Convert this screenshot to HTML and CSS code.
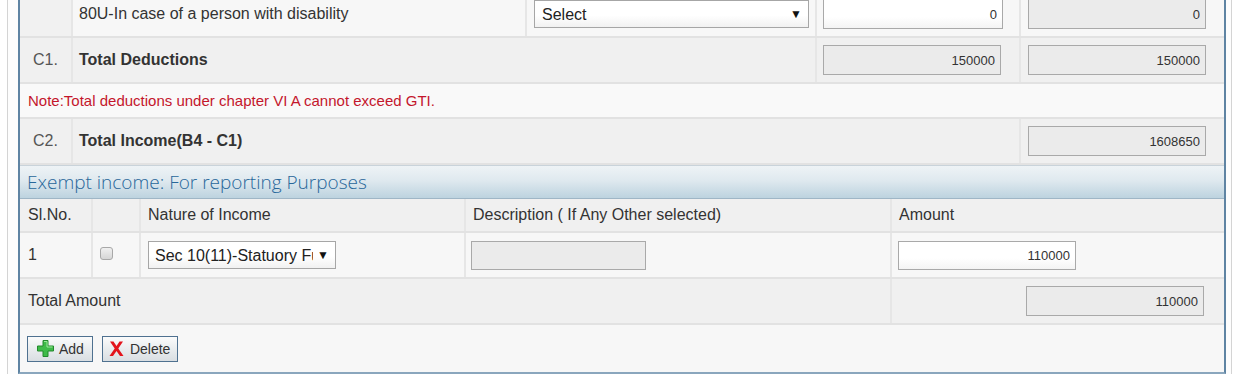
FILE: index.html
```html
<!DOCTYPE html>
<html lang="en">
<head>
  <meta charset="UTF-8">
  <title>Deductions and Exempt Income</title>
  <link rel="stylesheet" href="styles.css">
</head>
<body>
  <div class="page">
    <div class="panel">
      <div class="row top row-light">
        <div class="cell sl"></div>
        <div class="cell">80U-In case of a person with disability</div>
        <div class="cell">
          <div class="select-wrap wide">
            <select><option>Select</option></select>
          </div>
        </div>
        <div class="cell"><input class="num" type="text" value="0"></div>
        <div class="cell"><input class="num ro" type="text" value="0" readonly></div>
      </div>

      <div class="row top c1">
        <div class="cell sl center">C1.</div>
        <div class="cell span2"><b>Total Deductions</b></div>
        <div class="cell"><input class="num ro" type="text" value="150000" readonly></div>
        <div class="cell"><input class="num ro" type="text" value="150000" readonly></div>
      </div>

      <div class="row note">
        <div class="cell">Note:Total deductions under chapter VI A cannot exceed GTI.</div>
      </div>

      <div class="row top c2">
        <div class="cell sl center">C2.</div>
        <div class="cell span3"><b>Total Income(B4 - C1)</b></div>
        <div class="cell"><input class="num ro" type="text" value="1608650" readonly></div>
      </div>

      <div class="section-head">Exempt income: For reporting Purposes</div>

      <div class="row exempt head">
        <div class="cell">Sl.No.</div>
        <div class="cell"></div>
        <div class="cell">Nature of Income</div>
        <div class="cell">Description ( If Any Other selected)</div>
        <div class="cell">Amount</div>
      </div>

      <div class="row exempt data">
        <div class="cell">1</div>
        <div class="cell"><input class="check" type="checkbox"></div>
        <div class="cell">
          <div class="select-wrap narrow">
            <select><option>Sec 10(11)-Statuory Fund</option></select>
          </div>
        </div>
        <div class="cell"><input class="desc" type="text" disabled></div>
        <div class="cell"><input class="num" type="text" value="110000"></div>
      </div>

      <div class="row exempt total">
        <div class="cell span4">Total Amount</div>
        <div class="cell right"><input class="num ro" type="text" value="110000" readonly></div>
      </div>

      <div class="row actions">
        <button class="btn">
          <svg width="17" height="17" viewBox="0 0 17 17">
            <path d="M6 .5h5v5.5h5.5v5H11v5.5H6V11H.5V6H6z" fill="#3fbb49" stroke="#238a2d" stroke-width="1"/>
            <path d="M7 1.5h3v5.5h5.5" fill="none" stroke="#9be89b" stroke-width="1"/>
          </svg>
          Add
        </button>
        <button class="btn">
          <svg width="17" height="17" viewBox="0 0 17 17">
            <path d="M2 1.5h3.5L8.5 6l3-4.5H15L10.3 8.5 15.5 16H12L8.5 11 5 16H1.5l5.2-7.5z" fill="#e3141c"/>
          </svg>
          Delete
        </button>
      </div>
    </div>
  </div>
</body>
</html>
```

FILE: styles.css
```css
body {
  margin: 0;
  background: #fff;
  font-family: Arial, "Liberation Sans", sans-serif;
  font-size: 16px;
  color: #333;
}

.page {
  margin: -8px 0 0 7px;
  width: 1208px;
  padding: 0 5px 0 10px;
  border-left: 1px solid #d4d4d4;
  border-right: 1px solid #d4d4d4;
  background: #fdfdfd;
}

.panel {
  border-left: 2px solid #5f84a3;
  border-right: 2px solid #5f84a3;
  border-bottom: 2px solid #8aa6bd;
  background: #f7f7f7;
}

.row {
  display: grid;
  border-bottom: 2px solid #e2e2e2;
}

.cell {
  display: flex;
  align-items: center;
  min-width: 0;
  box-sizing: border-box;
  border-right: 2px solid #e6e6e6;
  padding: 0 6px;
  white-space: nowrap;
}

.cell:last-child {
  border-right: none;
}

.top {
  grid-template-columns: 53px 454px 290px 204px 1fr;
  height: 44px;
}

.top .cell:nth-child(3),
.top .cell:nth-child(5) {
  padding-left: 7px;
}

.row-light {
  background: #f7f7f7;
}

.row-light .sl {
  background: #f1f1f1;
}

.c1, .c2 {
  background: #f0f0f0;
}

.c1 .cell:nth-child(3) {
  padding-left: 6px;
}

.c1 .cell:nth-child(4),
.c2 .cell:nth-child(3) {
  padding-left: 7px;
}

.center {
  justify-content: center;
  color: #555;
}

.span2 { grid-column: span 2; }
.span3 { grid-column: span 3; }
.span4 { grid-column: span 4; }

.note {
  height: 33px;
  background: #f9f9f9;
}

.note .cell {
  padding-left: 8px;
  font-size: 15px;
  color: #c4162c;
}

.section-head {
  height: 32px;
  border-top: 1px solid #c9d3da;
  border-bottom: 1px solid #9fb6c6;
  background: linear-gradient(#eef3f6, #dfe9ef 45%, #bdd3df);
  padding-left: 7px;
  display: flex;
  align-items: center;
  font-family: "Open Sans", Arial, sans-serif;
  font-weight: 300;
  font-size: 19px;
  color: #28679a;
}

.exempt {
  grid-template-columns: 73px 48px 325px 426px 1fr;
}

.exempt .cell {
  padding-left: 7px;
}

.exempt .cell:first-child {
  padding-left: 8px;
}

.head {
  height: 32px;
  background: #f0f0f0;
}

.data {
  height: 44px;
  background: #f7f7f7;
}

.total {
  height: 44px;
  background: #f0f0f0;
}

.right {
  justify-content: flex-end;
  padding-right: 20px;
}

.actions {
  display: flex;
  align-items: center;
  gap: 9px;
  height: 47px;
  padding-left: 7px;
  border-bottom: none;
  background: #f7f7f7;
}

input.num {
  box-sizing: border-box;
  width: 180px;
  height: 30px;
  border: 1px solid #a9a9a9;
  padding: 0 5px;
  text-align: right;
  font-family: Arial, "Liberation Sans", sans-serif;
  font-size: 13px;
  color: #333;
  background: linear-gradient(#fff, #fff 60%, #f4f4f4);
}

input.ro {
  width: 178px;
  background: #ebebeb;
}

input.desc {
  box-sizing: border-box;
  width: 175px;
  height: 29px;
  margin-left: -2px;
  border: 1px solid #a9a9a9;
  background: #ebebeb;
}

.data input.num {
  width: 178px;
  height: 29px;
  margin-left: -1px;
}

.select-wrap {
  position: relative;
  box-sizing: border-box;
  border: 1px solid #a6a6a6;
  background: linear-gradient(#fff, #fff 55%, #f1f1f1);
}

.select-wrap select {
  appearance: none;
  -webkit-appearance: none;
  border: none;
  background: transparent;
  width: 100%;
  height: 100%;
  padding: 0 22px 0 7px;
  font-family: Arial, "Liberation Sans", sans-serif;
  font-size: 16px;
  color: #222;
  outline: none;
}

.select-wrap::after {
  content: "\25BC";
  position: absolute;
  right: 6px;
  top: 50%;
  transform: translateY(-50%);
  font-size: 12px;
  color: #111;
  pointer-events: none;
}

.wide {
  width: 275px;
  height: 28px;
}

.narrow {
  width: 188px;
  height: 28px;
}

.narrow select {
  padding: 0 22px 0 6px;
}

input.check {
  appearance: none;
  -webkit-appearance: none;
  margin: -4px 0 0 0;
  width: 13px;
  height: 13px;
  border: 1px solid #a8a8a8;
  border-radius: 3px;
  background: linear-gradient(#f0f0f0, #d6d6d6);
}

.btn {
  display: flex;
  align-items: center;
  gap: 5px;
  height: 26px;
  padding: 0 8px 0 9px;
  border: 1px solid #4f7190;
  background: linear-gradient(#fbfbfb, #e9ecee 50%, #d9dee2);
  font-family: Arial, "Liberation Sans", sans-serif;
  font-size: 14px;
  color: #333;
}

.btn:last-child {
  padding: 0 7px 0 5px;
}
```
